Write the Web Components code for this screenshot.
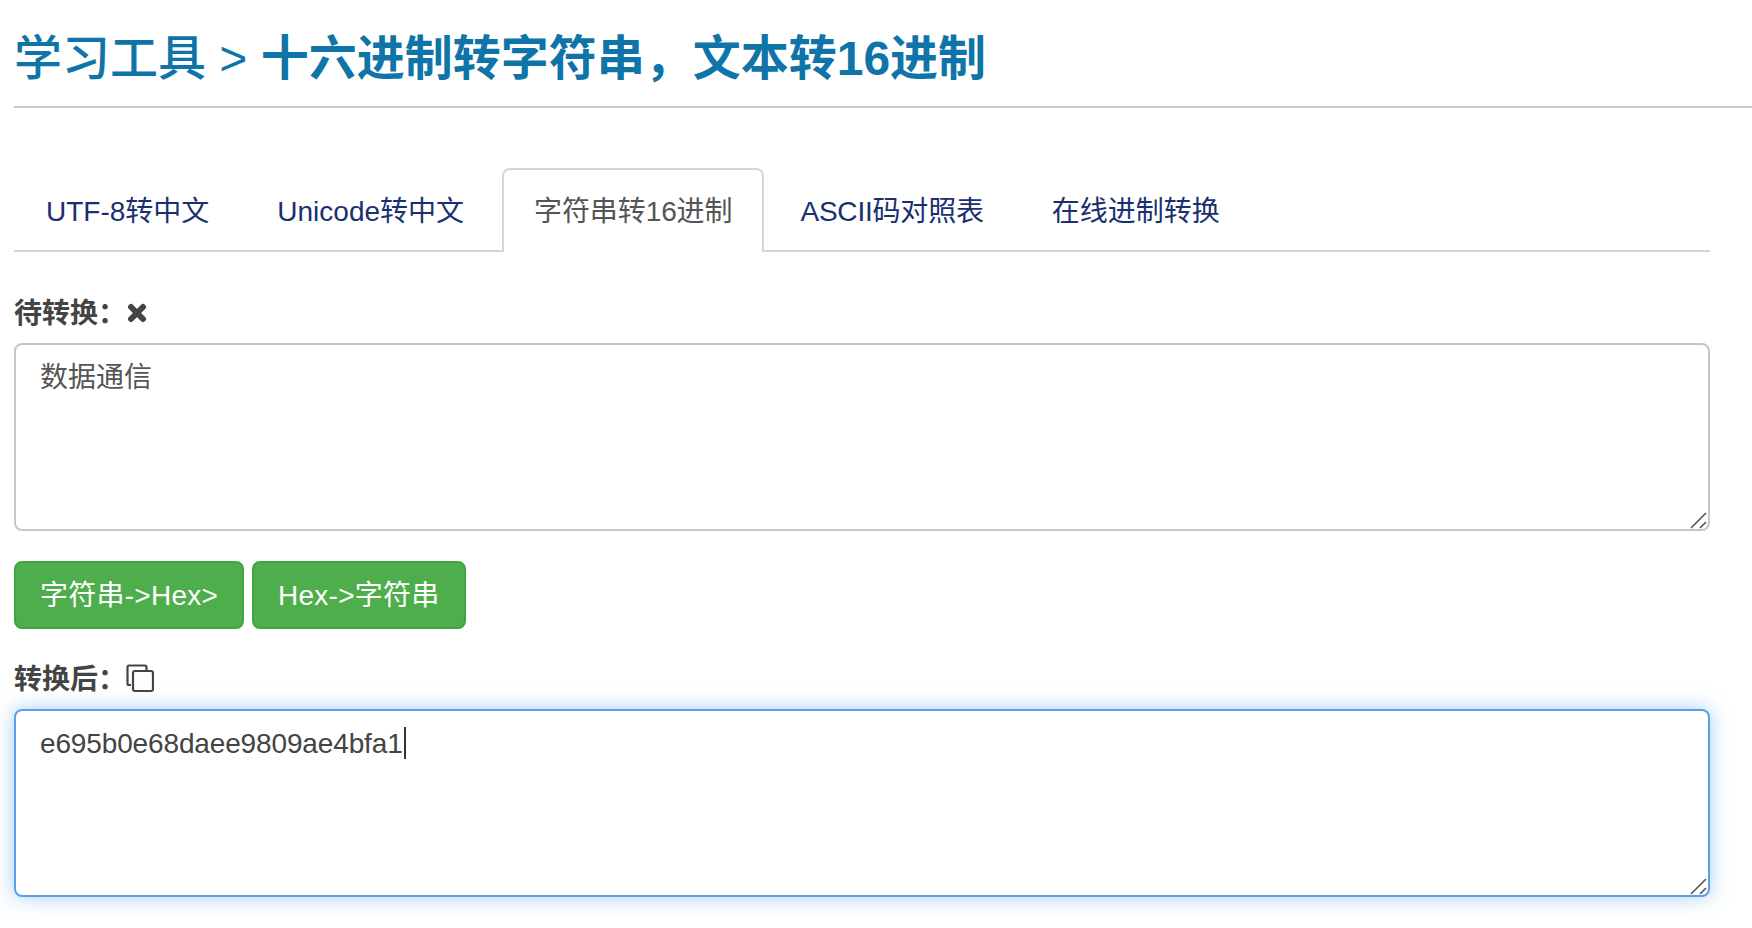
<!DOCTYPE html>
<html lang="zh">
<head>
<meta charset="utf-8">
<title>十六进制转字符串</title>
<style>
html, body { margin: 0; background: #fff; overflow: hidden; height: 100%; }
body { font-family: "Liberation Sans", "Noto Sans CJK SC", sans-serif; font-size: 28px; color: #444; }
</style>
</head>
<body>
<tool-page>
    <page-title slot="title" crumb="学习工具 >">十六进制转字符串，文本转16进制</page-title>
    <tab-bar>
        <tab-item style="margin-right: 4px">UTF-8转中文</tab-item>
        <tab-item style="margin-right: 6px">Unicode转中文</tab-item>
        <tab-item active>字符串转16进制</tab-item>
        <tab-item style="margin-right: 4px; letter-spacing: -.2px">ASCII码对照表</tab-item>
        <tab-item>在线进制转换</tab-item>
    </tab-bar>
    <field-label icon="remove">待转换：</field-label>
    <text-box>数据通信</text-box>
    <button-row>
        <green-button>字符串-&gt;Hex&gt;</green-button>
        <green-button>Hex-&gt;字符串</green-button>
    </button-row>
    <field-label icon="copy">转换后：</field-label>
    <text-box focused>e695b0e68daee9809ae4bfa1</text-box>
</tool-page>

<script>
class ToolPage extends HTMLElement {
    constructor() {
        super();
        this.attachShadow({ mode: 'open' });
        this.shadowRoot.innerHTML = `
            <style>
                :host { display: block; padding: 0 0 0 14px; }
                .body { width: 1696px; padding-top: 60px; }
            </style>
            <slot name="title"></slot>
            <div class="body"><slot></slot></div>
        `;
    }
}

class PageTitle extends HTMLElement {
    constructor() {
        super();
        this.attachShadow({ mode: 'open' });
        this.shadowRoot.innerHTML = `
            <style>
                :host { display: block; height: 106px; border-bottom: 2px solid #c9c9c5; color: #0f75a8; }
                h1 { margin: 0; padding-top: 28px; font-size: 48px; line-height: 62px; font-weight: 700; }
                .crumb { font-weight: 500; }
            </style>
            <h1><span class="crumb">${this.getAttribute('crumb')}</span> <slot></slot></h1>
        `;
    }
}

class TabBar extends HTMLElement {
    constructor() {
        super();
        this.attachShadow({ mode: 'open' });
        this.shadowRoot.innerHTML = `
            <style>
                :host { display: flex; height: 82px; border-bottom: 2px solid #d6d6d6; margin-bottom: 39px; }
            </style>
            <slot></slot>
        `;
    }
}

class TabItem extends HTMLElement {
    constructor() {
        super();
        this.attachShadow({ mode: 'open' });
        this.shadowRoot.innerHTML = `
            <style>
                :host { display: block; box-sizing: border-box; height: 84px; margin-right: 5px; padding: 22px 30px 18px;
                    border: 2px solid transparent; border-bottom: 0; border-radius: 8px 8px 0 0;
                    line-height: 40px; color: #1a3070; white-space: nowrap; }
                :host([active]) { background: #fff; color: #555; border-color: #d6d6d6; margin-right: 4px; letter-spacing: -.1px; }
            </style>
            <slot></slot>
        `;
    }
}

const LABEL_ICONS = {
    remove: `<svg width="20" height="20" viewBox="0 0 20 20" style="margin: 3px 0 0 1px"><path d="M4 4 L16 16 M16 4 L4 16" stroke="#444" stroke-width="6" stroke-linecap="round" fill="none"/></svg>`,
    copy: `<svg width="28" height="28" viewBox="0 0 28 28" style="margin-top: 2px" fill="none" stroke="#444" stroke-width="2.2"><path d="M5 21 H3 Q1.5 21 1.5 19.5 V3 Q1.5 1.5 3 1.5 H19 Q20.5 1.5 20.5 3 V6"/><rect x="7" y="7" width="20" height="20" rx="2"/></svg>`
};

class FieldLabel extends HTMLElement {
    constructor() {
        super();
        this.attachShadow({ mode: 'open' });
        this.shadowRoot.innerHTML = `
            <style>
                :host { display: flex; align-items: center; height: 40px; margin-bottom: 12px; font-weight: 700; color: #444; }
                svg { display: block; }
            </style>
            <slot></slot>${LABEL_ICONS[this.getAttribute('icon')] || ''}
        `;
    }
}

class TextBox extends HTMLElement {
    constructor() {
        super();
        this.attachShadow({ mode: 'open' });
        this.shadowRoot.innerHTML = `
            <style>
                :host { display: block; position: relative; box-sizing: border-box; height: 188px; padding: 13px 24px 11px;
                    border: 2px solid #c6c6c6; border-radius: 8px; line-height: 40px; color: #555; background: #fff; }
                :host([focused]) { border-color: #5b9fe6; box-shadow: 0 0 20px rgba(102, 175, 233, .6); color: #444; letter-spacing: -.14px; }
                .caret { display: none; width: 2px; height: 32px; margin-left: 1px; background: #333; vertical-align: -6px; }
                :host([focused]) .caret { display: inline-block; }
                svg { position: absolute; right: 0; bottom: 0; }
            </style>
            <slot></slot><span class="caret"></span>
            <svg width="18" height="18" viewBox="0 0 18 18" fill="none" stroke="#555" stroke-width="1.6"><path d="M1 17 L16 2 M10 17 L16 11"/></svg>
        `;
    }
}

class ButtonRow extends HTMLElement {
    constructor() {
        super();
        this.attachShadow({ mode: 'open' });
        this.shadowRoot.innerHTML = `
            <style>
                :host { display: flex; gap: 8px; margin: 30px 0 28px; }
            </style>
            <slot></slot>
        `;
    }
}

class GreenButton extends HTMLElement {
    constructor() {
        super();
        this.attachShadow({ mode: 'open' });
        this.shadowRoot.innerHTML = `
            <style>
                :host { display: block; padding: 13px 24px 11px; border: 2px solid #43a343; border-radius: 8px;
                    background: #4fae4c; color: #fff; line-height: 40px; height: 40px; white-space: nowrap; letter-spacing: .25px; }
            </style>
            <slot></slot>
        `;
    }
}

customElements.define('tool-page', ToolPage);
customElements.define('page-title', PageTitle);
customElements.define('tab-bar', TabBar);
customElements.define('tab-item', TabItem);
customElements.define('field-label', FieldLabel);
customElements.define('text-box', TextBox);
customElements.define('button-row', ButtonRow);
customElements.define('green-button', GreenButton);
</script>
</body>
</html>
